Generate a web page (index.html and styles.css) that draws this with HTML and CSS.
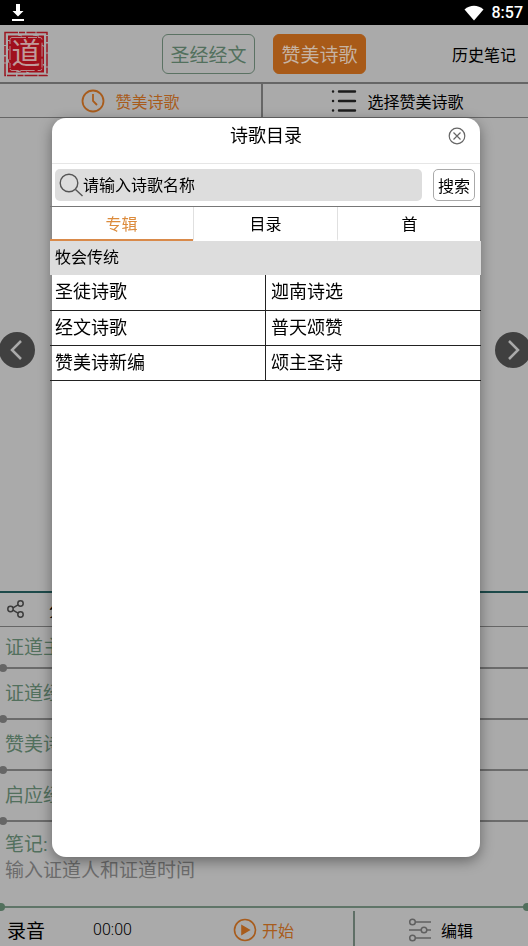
FILE: index.html
```html
<!DOCTYPE html>
<html lang="zh-CN">
<head>
  <meta charset="UTF-8">
  <meta name="viewport" content="width=device-width, initial-scale=1">
  <title>诗歌目录</title>
  <link rel="stylesheet" href="styles.css">
</head>
<body>

  <div class="app">
    <div class="status-bar">
      <svg width="14" height="18" viewBox="0 0 14 18" fill="#fff">
        <path d="M5 0h4v7h3.500L7 12.500 1.500 7H5z"/>
        <rect x="1" y="15" width="12" height="2"/>
      </svg>
      <div class="status-right">
        <svg width="20" height="16" viewBox="0 0 20 16" fill="#fff">
          <path d="M0.500 4.500C6-0.500 14-0.500 19.500 4.500L10 15.500z"/>
        </svg>
        <span>8:57</span>
      </div>
    </div>

    <header class="header">
      <svg class="logo" width="44" height="46" viewBox="0 0 44 46" role="img" aria-label="道">
        <rect x="1" y="1.500" width="42" height="43" fill="none" stroke="#9b1620" stroke-width="1.500" stroke-dasharray="13 1 6 1.500 9 1"/>
        <rect x="4" y="4.500" width="36" height="37" fill="#a0101c"/>
        <rect x="6" y="6.500" width="32" height="33" rx="2" fill="none" stroke="#b88b8d" stroke-width="1" stroke-dasharray="14 2 9 1 5 3"/>
        <text class="logo-text" x="22" y="33" text-anchor="middle">道</text>
        <path d="M3 9l3 1M38 14l3 2M4 28l1 4M39 33l2 3M12 41l5-1M29 4l6 1M3 18l2 1M22 41l3 1M14 4l4 1" stroke="#aaa" stroke-width="1"/>
      </svg>
      <div class="switch">
        <button class="switch-btn">圣经经文</button>
        <button class="switch-btn active">赞美诗歌</button>
      </div>
      <a class="history" href="#">历史笔记</a>
    </header>

    <nav class="sub-nav">
      <button class="sub-btn orange">
        <svg width="24" height="24" viewBox="0 0 24 24" fill="none" stroke="#a85c1c" stroke-width="1.800">
          <circle cx="12" cy="12" r="10.500"/>
          <path d="M12 5v7l4 4"/>
        </svg>
        赞美诗歌
      </button>
      <button class="sub-btn">
        <svg width="26" height="24" viewBox="0 0 26 24" stroke="#1c1c1c" stroke-width="2.400" stroke-linecap="round">
          <path d="M8 2.500h16M8 12h16M8 21.500h16M2 2.500h.1M2 12h.1M2 21.500h.1"/>
        </svg>
        选择赞美诗歌
      </button>
    </nav>

    <main class="stage">
      <button class="arrow arrow-left" aria-label="上一页">
        <svg width="36" height="36" viewBox="0 0 36 36" fill="none" stroke="#aaa" stroke-width="2.500">
          <path d="M22 9l-9 9 9 9"/>
        </svg>
      </button>
      <button class="arrow arrow-right" aria-label="下一页">
        <svg width="36" height="36" viewBox="0 0 36 36" fill="none" stroke="#aaa" stroke-width="2.500">
          <path d="M14 9l9 9-9 9"/>
        </svg>
      </button>
    </main>

    <div class="share-bar">
      <button class="share-btn">
        <svg width="18" height="18" viewBox="0 0 18 18" fill="none" stroke="#3c3c3c" stroke-width="1.500">
          <circle cx="3.500" cy="9" r="2.700"/>
          <circle cx="13.500" cy="3.500" r="2.700"/>
          <circle cx="13.500" cy="14.500" r="2.700"/>
          <path d="M6 7.800l5-3M6 10.200l5 3"/>
        </svg>
        <span>分享</span>
      </button>
    </div>

    <form class="note-form">
      <div class="field first">
        <label for="topic">证道主题:</label>
        <input type="text" id="topic">
      </div>
      <div class="field">
        <label for="scripture">证道经文:</label>
        <input type="text" id="scripture">
      </div>
      <div class="field">
        <label for="hymn">赞美诗歌:</label>
        <input type="text" id="hymn">
      </div>
      <div class="field">
        <label for="reading">启应经文:</label>
        <input type="text" id="reading">
      </div>
      <div class="field notes">
        <label for="notes">笔记:</label>
        <textarea id="notes" rows="2" placeholder="输入证道人和证道时间"></textarea>
      </div>
    </form>

    <footer class="footer">
      <div class="record">
        <span class="record-title">录音</span>
        <span class="record-time">00:00</span>
        <button class="footer-btn orange">
          <svg width="24" height="24" viewBox="0 0 24 24" fill="none" stroke="#a85c1c" stroke-width="1.600">
            <circle cx="12" cy="12" r="10.500"/>
            <path d="M9 8v8l7-4z" fill="#a85c1c"/>
          </svg>
          开始
        </button>
      </div>
      <div class="edit">
        <button class="footer-btn">
          <svg width="24" height="24" viewBox="0 0 24 24" fill="none" stroke="#606060" stroke-width="1.500">
            <circle cx="4.500" cy="4" r="2.800"/>
            <circle cx="16" cy="12" r="2.800"/>
            <circle cx="4.500" cy="20" r="2.800"/>
            <path d="M7.500 4H23M1 12h12M19 12h4M7.500 20H23"/>
          </svg>
          编辑
        </button>
      </div>
    </footer>
  </div>

  <!-- Hymn catalogue dialog -->
  <div class="dialog" role="dialog" aria-labelledby="dialogTitle">
    <div class="dialog-header">
      <h2 id="dialogTitle">诗歌目录</h2>
      <button class="close" aria-label="关闭">
        <svg width="18" height="18" viewBox="0 0 18 18" fill="none" stroke="#666" stroke-width="1.200">
          <circle cx="9" cy="9" r="7.800"/>
          <path d="M5.500 5.500l7 7M12.500 5.500l-7 7"/>
        </svg>
      </button>
    </div>

    <div class="search">
      <div class="search-box">
        <svg width="24" height="24" viewBox="0 0 24 24" fill="none" stroke="#555" stroke-width="1.400">
          <circle cx="10" cy="10" r="8.800"/>
          <path d="M16.500 16.500l7 6.500"/>
        </svg>
        <input type="text" placeholder="请输入诗歌名称" aria-label="请输入诗歌名称">
      </div>
      <button class="search-btn">搜索</button>
    </div>

    <div class="tabs">
      <button class="tab active">专辑</button>
      <button class="tab">目录</button>
      <button class="tab">首</button>
    </div>

    <h3 class="group">牧会传统</h3>
    <table class="albums">
      <tr><td>圣徒诗歌</td><td>迦南诗选</td></tr>
      <tr><td>经文诗歌</td><td>普天颂赞</td></tr>
      <tr><td>赞美诗新编</td><td>颂主圣诗</td></tr>
    </table>
  </div>

</body>
</html>
```
FILE: styles.css
```css
* {
  box-sizing: border-box;
}

body {
  margin: 0;
  background: #aaa;
  color: #000;
  font-family: Roboto, "Noto Sans CJK SC", sans-serif;
  font-size: 16px;
}

button, input, textarea {
  font-family: inherit;
  font-size: 16px;
  color: inherit;
  background: none;
  border: none;
  border-radius: 0;
  padding: 0;
  margin: 0;
  outline: none;
}

button {
  cursor: pointer;
}

svg {
  display: block;
  flex: none;
}

.app {
  display: flex;
  flex-direction: column;
  min-height: 100vh;
  overflow: hidden;
}

.status-bar {
  display: flex;
  align-items: center;
  justify-content: space-between;
  height: 25px;
  padding: 0 5px 0 11px;
  background: #000;
  color: #fff;
  font-weight: 500;
}

.status-right {
  display: flex;
  align-items: center;
  gap: 8px;
}

.header {
  display: grid;
  grid-template-columns: 1fr auto 1fr;
  align-items: center;
  height: 59px;
  padding: 0 4px;
  border-bottom: 2px solid #666;
}

.logo {
  overflow: visible;
}

.logo-text {
  font-family: "Noto Sans CJK SC", sans-serif;
  font-size: 29px;
  line-height: 32px;
  fill: #c09a9a;
}

.switch {
  display: flex;
  gap: 18px;
}

.switch-btn {
  width: 93px;
  height: 40px;
  border: 1px solid #5b7263;
  border-radius: 6px;
  color: #52705d;
  font-size: 19px;
}

.switch-btn.active {
  background: #a85a18;
  border-color: #a85a18;
  color: #c6b3a3;
}

.history {
  justify-self: end;
  margin-right: 8px;
  color: #000;
  text-decoration: none;
}

.sub-nav {
  display: flex;
  height: 34px;
  border-bottom: 1px solid #666;
}

.sub-btn {
  flex: 1;
  display: flex;
  align-items: center;
  justify-content: center;
  gap: 10px;
}

.sub-btn + .sub-btn {
  padding-left: 4px;
  border-left: 2px solid #666;
}

.orange {
  color: #a85c1c;
}

.stage {
  flex: 1;
  display: flex;
  align-items: center;
  justify-content: space-between;
}

.arrow {
  width: 36px;
  height: 36px;
  margin-bottom: 10px;
  border-radius: 50%;
  background: #404040;
}

.arrow-left {
  margin-left: -1px;
}

.arrow-right {
  margin-right: -3px;
}

.share-bar {
  height: 36px;
  border-top: 2px solid #1d4a4a;
  border-bottom: 1px solid #666;
}

.share-btn {
  display: flex;
  align-items: center;
  gap: 24px;
  height: 32px;
  padding-left: 7px;
}

.field {
  position: relative;
  display: flex;
  height: 51px;
  padding: 11px 5px 9px;
  border-bottom: 2px solid #6b6b6b;
  color: #52705d;
  font-size: 19px;
  line-height: 28px;
}

.field.first {
  height: 42px;
  padding-top: 7px;
  padding-bottom: 5px;
}

.field input {
  flex: 1;
  min-width: 0;
  margin-left: 8px;
}

/* dot at the end of each line */
.field::before,
.notes::after {
  content: "";
  position: absolute;
  left: -1px;
  bottom: -5px;
  width: 8px;
  height: 8px;
  border-radius: 50%;
  background: #666;
}

.notes {
  flex-direction: column;
  height: 86px;
  padding: 10px 5px 6px;
  border-color: #5f7568;
  line-height: 26px;
}

.notes::before,
.notes::after {
  background: #52705d;
}

.notes::before {
  left: -3px;
}

.notes::after {
  left: auto;
  right: -3px;
}

.notes textarea {
  display: block;
  font-size: 19px;
  line-height: 26px;
  resize: none;
}

.notes textarea::placeholder {
  color: #6c6c6c;
}

.footer {
  display: flex;
  height: 38px;
  padding-top: 3px;
}

.record {
  flex: 2;
  display: flex;
  align-items: center;
  padding: 2px 0 0 7px;
}

.record-title {
  font-size: 19px;
}

.record-time {
  margin-left: 48px;
  font-weight: 300;
}

.record .footer-btn {
  margin: 0 auto;
  padding-left: 42px;
  gap: 5px;
}

.edit {
  flex: 1;
  display: flex;
  align-items: center;
  justify-content: center;
  padding-top: 2px;
  border-left: 2px solid #5f6f66;
}

.edit .footer-btn {
  margin-right: 2px;
}

.footer-btn {
  display: flex;
  align-items: center;
  gap: 9px;
}

.dialog {
  position: fixed;
  top: 118px;
  right: 48px;
  bottom: 89px;
  left: 52px;
  background: #fff;
  border-radius: 14px;
  box-shadow: 0 4px 14px rgba(0, 0, 0, 0.4);
}

.dialog-header {
  display: grid;
  grid-template-columns: 1fr auto 1fr;
  align-items: center;
  height: 46px;
  padding: 0 14px 10px;
  border-bottom: 1px solid #e6e6e6;
}

.dialog-header h2 {
  grid-column: 2;
  margin: 0;
  font-size: 18px;
  font-weight: 400;
  line-height: 26px;
}

.close {
  justify-self: end;
}

.search {
  display: flex;
  gap: 11px;
  padding: 5px 5px 5px 3px;
}

.search-box {
  flex: 1;
  display: flex;
  align-items: center;
  height: 32px;
  padding-left: 4px;
  border-radius: 5px;
  background: #ddd;
}

.search-box input {
  flex: 1;
  min-width: 0;
}

.search-box input::placeholder {
  color: #000;
}

.search-btn {
  width: 42px;
  height: 32px;
  border: 1px solid #aaa;
  border-radius: 5px;
}

/* tabs and list run slightly past the dialog edges */
.tabs,
.group,
.albums {
  margin: 0 -1px 0 -2px;
}

.tabs {
  display: flex;
  height: 35px;
  border-top: 1px solid #777;
}

.tab {
  flex: 1;
  border-bottom: 2px solid transparent;
}

.tab + .tab {
  border-left: 1px solid #e0e0e0;
}

.tab.active {
  color: #dc8b3c;
  border-bottom-color: #d98a4a;
}

.group {
  padding: 0 5px;
  background: #ddd;
  font-size: 16px;
  font-weight: 400;
  line-height: 34px;
}

.albums {
  width: calc(100% + 3px);
  border-collapse: collapse;
  table-layout: fixed;
  font-size: 18px;
  line-height: 34px;
}

.albums td {
  height: 35px;
  padding: 0 5px;
  border-bottom: 1px solid #222;
}

.albums td + td {
  border-left: 1px solid #222;
}
```
